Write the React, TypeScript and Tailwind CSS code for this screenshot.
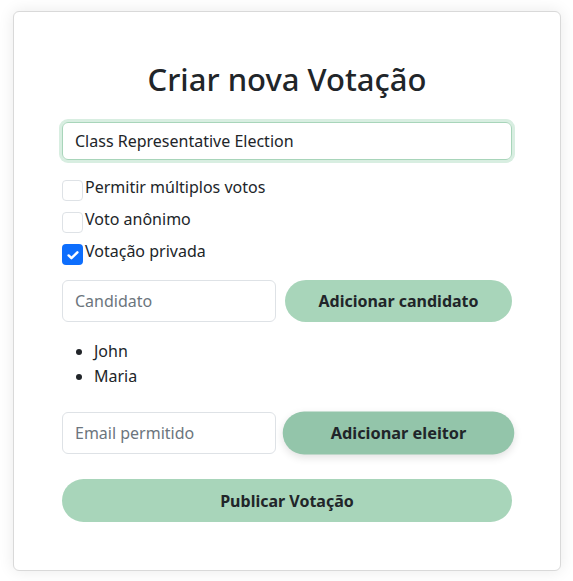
import React, { useState } from "react";

const font = { fontFamily: '"Noto Sans", "Open Sans", sans-serif' };

export default function App() {
  const [title, setTitle] = useState("Class Representative Election");
  const [multi, setMulti] = useState(false);
  const [anon, setAnon] = useState(false);
  const [priv, setPriv] = useState(true);
  const candidates = ["John", "Maria"];

  const options = [
    { label: "Permitir múltiplos votos", checked: multi, set: setMulti },
    { label: "Voto anônimo", checked: anon, set: setAnon },
    { label: "Votação privada", checked: priv, set: setPriv },
  ];

  return (
    <div className="min-h-screen bg-white pt-[11px] text-[#212529]" style={font}>
      <div className="ml-[13px] w-[548px] rounded-[6px] border border-[#d9d9d9] bg-white px-[48px] pt-[48px] pb-[48px] shadow-[0_0_16px_rgba(0,0,0,0.09)]">
        {/* Title */}
        <h2 className="text-center text-[31px] font-medium leading-[38px] text-[#212529]">
          Criar nova Votação
        </h2>

        <input
          type="text"
          value={title}
          onChange={e => setTitle(e.target.value)}
          className="mt-[24px] block h-[38px] w-full rounded-[6px] border border-[#a8d5ba] px-[12px] text-[16px] text-[#212529] shadow-[0_0_0_3px_#d8eee1] outline-none"
        />

        {/* Options */}
        <div className="mt-[20px] flex flex-col gap-[11px]">
          {options.map(o => (
            <label key={o.label} className="flex h-[21px] items-center gap-[2px] text-[16px] leading-[21px]">
              <button
                type="button"
                onClick={() => o.set(!o.checked)}
                className={
                  o.checked
                    ? "flex h-[21px] w-[21px] items-center justify-center rounded-[4px] bg-[#0d6efd]"
                    : "h-[21px] w-[21px] rounded-[4px] border border-[#dee2e6] bg-white"
                }
              >
                {o.checked && (
                  <svg width="14" height="14" viewBox="0 0 16 16" fill="none">
                    <path d="M3 8.5l3.2 3.2L13 5" stroke="white" strokeWidth="2.8" strokeLinecap="round" strokeLinejoin="round" />
                  </svg>
                )}
              </button>
              <span className="-mt-[6px]">{o.label}</span>
            </label>
          ))}
        </div>

        {/* Candidates */}
        <div className="mt-[15px] flex gap-[9px]">
          <input
            type="text"
            placeholder="Candidato"
            className="h-[42px] w-[214px] rounded-[6px] border border-[#dee2e6] px-[12px] text-[16px] outline-none placeholder:text-[#6c757d]"
          />
          <button className="h-[42px] flex-1 rounded-full bg-[#a8d5ba] text-[16px] font-bold text-[#212529]">
            Adicionar candidato
          </button>
        </div>

        <ul className="mt-[17px] list-disc pl-[32px] text-[16px] leading-[25px]">
          {candidates.map(c => (
            <li key={c}>{c}</li>
          ))}
        </ul>

        {/* Voters */}
        <div className="mt-[23px] flex gap-[9px]">
          <input
            type="email"
            placeholder="Email permitido"
            className="h-[42px] w-[214px] rounded-[6px] border border-[#dee2e6] px-[12px] text-[16px] outline-none placeholder:text-[#6c757d]"
          />
          <button className="h-[42px] flex-1 scale-[1.02] rounded-full bg-[#93c5aa] text-[16px] font-bold text-[#212529] shadow-[0_3px_8px_rgba(0,0,0,0.12)]">
            Adicionar eleitor
          </button>
        </div>

        <button className="mt-[25px] block h-[43px] w-full rounded-full bg-[#a8d5ba] text-[16px] font-bold text-[#212529]">
          Publicar Votação
        </button>
      </div>
    </div>
  );
}
